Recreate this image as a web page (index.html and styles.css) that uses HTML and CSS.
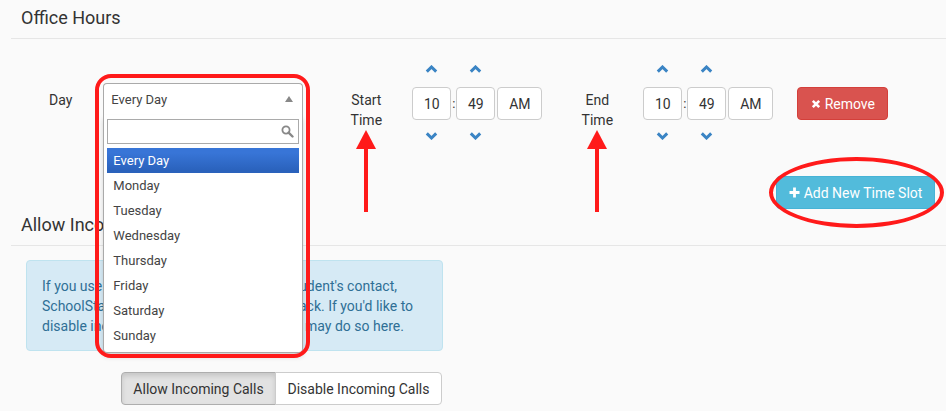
FILE: index.html
```html
<!DOCTYPE html>
<html>
<head>
<meta charset="utf-8">
<link rel="stylesheet" href="styles.css">
</head>
<body>
<div class="page">
  <section class="section">
    <h2 class="section-title">Office Hours</h2>
    <div class="slot-row">
      <label class="day-label">Day</label>
      <div class="chosen">
        <div class="chosen-single"><span>Every Day</span><b class="tri"></b></div>
        <div class="chosen-drop">
          <div class="chosen-search">
            <input type="text" class="search-input">
            <svg class="search-icon" width="13" height="13" viewBox="0 0 13 13"><circle cx="5" cy="5" r="3.6" fill="none" stroke="#888" stroke-width="1.8"/><path d="M7.6 7.6 L11.5 11.5" stroke="#888" stroke-width="2.4" stroke-linecap="round"/></svg>
          </div>
          <ul class="chosen-results">
            <li class="hl">Every Day</li>
            <li>Monday</li>
            <li>Tuesday</li>
            <li>Wednesday</li>
            <li>Thursday</li>
            <li>Friday</li>
            <li>Saturday</li>
            <li>Sunday</li>
          </ul>
        </div>
        <div class="annot-rect"></div>
      </div>

      <div class="time-label">Start<br>Time
        <svg class="annot-arrow" width="20" height="82" viewBox="0 0 20 82"><polygon points="10,0 20,19 0,19" fill="#ff1a1a"/><rect x="8" y="18" width="4" height="64" fill="#ff1a1a"/></svg>
      </div>
      <div class="timepicker">
        <div class="tp-col">
          <a class="chev"><svg width="13" height="8" viewBox="0 0 13 8"><path d="M1.8 6.6 L6.5 2 L11.2 6.6" fill="none" stroke="#3a84c4" stroke-width="3"/></svg></a>
          <div class="tp-input">10</div>
          <a class="chev"><svg width="13" height="8" viewBox="0 0 13 8"><path d="M1.8 1.4 L6.5 6 L11.2 1.4" fill="none" stroke="#3a84c4" stroke-width="3"/></svg></a>
        </div>
        <div class="tp-colon">:</div>
        <div class="tp-col">
          <a class="chev"><svg width="13" height="8" viewBox="0 0 13 8"><path d="M1.8 6.6 L6.5 2 L11.2 6.6" fill="none" stroke="#3a84c4" stroke-width="3"/></svg></a>
          <div class="tp-input">49</div>
          <a class="chev"><svg width="13" height="8" viewBox="0 0 13 8"><path d="M1.8 1.4 L6.5 6 L11.2 1.4" fill="none" stroke="#3a84c4" stroke-width="3"/></svg></a>
        </div>
        <div class="tp-col">
          <div class="tp-input tp-meridian">AM</div>
        </div>
      </div>

      <div class="time-label end">End<br>Time
        <svg class="annot-arrow" width="20" height="82" viewBox="0 0 20 82"><polygon points="10,0 20,19 0,19" fill="#ff1a1a"/><rect x="8" y="18" width="4" height="64" fill="#ff1a1a"/></svg>
      </div>
      <div class="timepicker">
        <div class="tp-col">
          <a class="chev"><svg width="13" height="8" viewBox="0 0 13 8"><path d="M1.8 6.6 L6.5 2 L11.2 6.6" fill="none" stroke="#3a84c4" stroke-width="3"/></svg></a>
          <div class="tp-input">10</div>
          <a class="chev"><svg width="13" height="8" viewBox="0 0 13 8"><path d="M1.8 1.4 L6.5 6 L11.2 1.4" fill="none" stroke="#3a84c4" stroke-width="3"/></svg></a>
        </div>
        <div class="tp-colon">:</div>
        <div class="tp-col">
          <a class="chev"><svg width="13" height="8" viewBox="0 0 13 8"><path d="M1.8 6.6 L6.5 2 L11.2 6.6" fill="none" stroke="#3a84c4" stroke-width="3"/></svg></a>
          <div class="tp-input">49</div>
          <a class="chev"><svg width="13" height="8" viewBox="0 0 13 8"><path d="M1.8 1.4 L6.5 6 L11.2 1.4" fill="none" stroke="#3a84c4" stroke-width="3"/></svg></a>
        </div>
        <div class="tp-col">
          <div class="tp-input tp-meridian">AM</div>
        </div>
      </div>

      <button class="btn btn-danger remove-btn"><svg width="10" height="10" viewBox="0 0 10 10"><path d="M1.8 1.8 L8.2 8.2 M8.2 1.8 L1.8 8.2" stroke="#fff" stroke-width="2.6"/></svg>Remove</button>
    </div>
    <div class="add-row">
      <button class="btn btn-info add-btn"><svg width="11" height="11" viewBox="0 0 11 11"><path d="M5.5 0.5 V10.5 M0.5 5.5 H10.5" stroke="#fff" stroke-width="2.8"/></svg>Add New Time Slot
        <span class="annot-ellipse"></span>
      </button>
    </div>
  </section>

  <section class="section incoming">
    <h2 class="section-title">Allow Incoming Calls</h2>
    <div class="alert-info">If you use SchoolStatus to call or text a student's contact,<br>SchoolStatus will allow them to call you back. If you'd like to<br>disable incoming calls to this number, you may do so here.</div>
    <div class="btn-group">
      <button class="btn btn-default active">Allow Incoming Calls</button>
      <button class="btn btn-default">Disable Incoming Calls</button>
    </div>
  </section>
</div>
</body>
</html>
```

FILE: styles.css
```css
* { box-sizing: border-box; }
html, body { margin: 0; padding: 0; }
body {
  background: #fafafa;
  font-family: Roboto, "Liberation Sans", Arial, sans-serif;
  font-size: 14px;
  color: #333;
  width: 946px;
  height: 411px;
  overflow: hidden;
}
.page { padding-left: 11px; }

.section-title {
  margin: 0;
  font-size: 18px;
  font-weight: 400;
  line-height: 22px;
  padding: 7px 10px 9px;
  border-bottom: 1px solid #e6e6e6;
  color: #333;
}
.incoming .section-title { padding-top: 5px; }

.slot-row {
  display: flex;
  align-items: flex-start;
  margin-top: 21px;
  height: 85px;
}
.day-label {
  margin: 30px 0 0 38px;
  line-height: 20px;
}
.chosen {
  position: relative;
  width: 200px;
  margin: 23px 0 0 31px;
  font-size: 13px;
}
.chosen-single {
  height: 33px;
  border: 1px solid #aaa;
  border-bottom-color: #e8e8e8;
  border-radius: 4px 4px 0 0;
  background: #fff;
  display: flex;
  align-items: center;
  justify-content: space-between;
  padding: 0 9px 0 7px;
  color: #444;
}
.tri {
  width: 0; height: 0;
  border-left: 4px solid transparent;
  border-right: 4px solid transparent;
  border-bottom: 6px solid #888;
  margin-top: -1px;
}
.chosen-drop {
  position: absolute;
  top: 32px;
  left: 0;
  width: 200px;
  background: #fff;
  border: 1px solid #aaa;
  border-top: 0;
  border-radius: 0 0 4px 4px;
  box-shadow: 0 4px 5px rgba(0,0,0,.15);
  padding: 4px 3px 4px 3px;
  z-index: 5;
}
.chosen-search { position: relative; }
.search-input {
  display: block;
  width: 100%;
  height: 25px;
  border: 1px solid #aaa;
  margin: 0;
  padding: 0 20px 0 5px;
  background: #fff;
  outline: none;
}
.search-icon { position: absolute; right: 5px; top: 6px; }
.chosen-results {
  list-style: none;
  margin: 4px 0 0;
  padding: 0;
  color: #444;
}
.chosen-results li {
  height: 25px;
  line-height: 15px;
  padding: 5px 6px;
}
.chosen-results li.hl {
  background: linear-gradient(#3875d7 20%, #2a62bc 90%);
  color: #fff;
}

.time-label {
  position: relative;
  width: 60px;
  text-align: center;
  line-height: 20px;
  margin: 30px 0 0 33px;
}
.time-label.end { margin-left: 25px; }
.annot-arrow {
  position: absolute;
  left: 20px;
  top: 40px;
}

.timepicker {
  display: flex;
  align-items: flex-start;
  margin-left: 16px;
}
.tp-col {
  display: flex;
  flex-direction: column;
  align-items: center;
}
.chev {
  height: 18px;
  display: flex;
  align-items: center;
  justify-content: center;
}
.tp-input {
  width: 39px;
  height: 33px;
  margin: 9px 0 7px;
  border: 1px solid #ccc;
  border-radius: 4px;
  background: #fff;
  display: flex;
  align-items: center;
  justify-content: center;
  color: #333;
}
.tp-meridian {
  width: 45px;
  margin-left: 2px;
  margin-top: 27px;
}
.tp-colon {
  width: 5px;
  margin-top: 27px;
  height: 33px;
  line-height: 33px;
  text-align: center;
  font-size: 13px;
}

.btn {
  font-family: inherit;
  border: 1px solid transparent;
  border-radius: 4px;
  display: inline-flex;
  align-items: center;
  justify-content: center;
  cursor: pointer;
  padding: 0 10px;
}
.btn svg { margin-right: 4px; }
.btn-danger {
  background: #d9534f;
  border-color: #d43f3a;
  color: #fff;
}
.remove-btn {
  width: 91px;
  height: 33px;
  margin: 27px 0 0 24px;
  font-size: 14px;
}
.add-row {
  display: flex;
  justify-content: flex-end;
  margin-top: 31px;
  padding-right: 11px;
  height: 33px;
}
.btn-info {
  position: relative;
  background: #52bbdb;
  border-color: #46b3d6;
  color: #fff;
}
.add-btn {
  width: 159px;
  height: 33px;
  font-size: 14px;
}
.annot-ellipse {
  position: absolute;
  left: -8px;
  top: -20px;
  width: 175px;
  height: 71px;
  border: 4px solid #ff1a1a;
  border-radius: 50%;
  pointer-events: none;
}
.annot-rect {
  position: absolute;
  left: -8px;
  top: -9px;
  width: 215px;
  height: 284px;
  border: 4px solid #ff1a1a;
  border-radius: 16px;
  z-index: 6;
  pointer-events: none;
}

.alert-info {
  margin: 14px 0 0 15px;
  width: 417px;
  height: 91px;
  padding: 15px;
  background: #d6eaf5;
  border: 1px solid #bfe3ef;
  border-radius: 4px;
  color: #2f6f95;
  font-size: 14px;
  line-height: 20px;
  white-space: nowrap;
}
.btn-group {
  display: flex;
  margin: 21px 0 0 110px;
}
.btn-default {
  height: 33px;
  font-size: 14px;
  background: #fff;
  border: 1px solid #ccc;
  color: #333;
}
.btn-group .btn:first-child {
  width: 155px;
  border-radius: 4px 0 0 4px;
}
.btn-group .btn:last-child {
  width: 167px;
  border-radius: 0 4px 4px 0;
  margin-left: -1px;
}
.btn-default.active {
  background: #e2e2e2;
  border-color: #adadad;
  box-shadow: inset 0 3px 5px rgba(0,0,0,.125);
}
```
